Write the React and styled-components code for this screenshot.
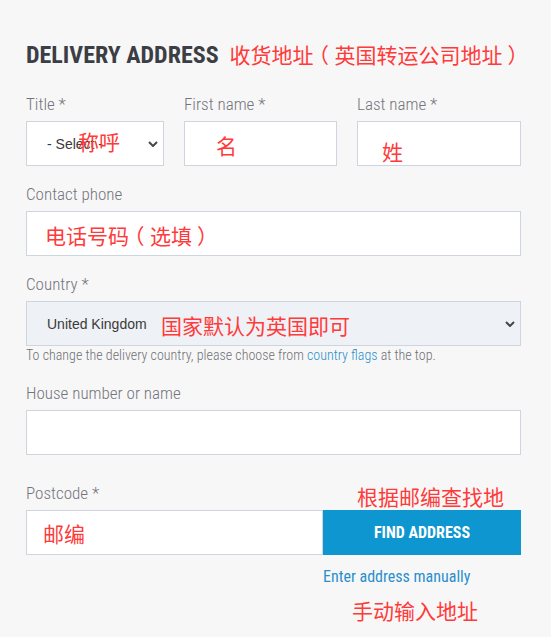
import React from "react";
import styled, { createGlobalStyle } from "styled-components";

const Global = createGlobalStyle`
  html, body { margin: 0; padding: 0; background: #ffffff; }
  * { box-sizing: border-box; }
`;

const cond = `"Roboto Condensed", "Roboto", "Liberation Sans", sans-serif`;
const cjk = `"Noto Sans CJK SC", "Noto Sans", sans-serif`;

const Page = styled.div`
  width: 551px;
  height: 637px;
  background: #f7f7f7;
  padding: 39px 30px 0 26px;
  font-family: ${cond};
  font-stretch: condensed;
`;

const Heading = styled.h2`
  margin: 0 0 24px;
  font-size: 24px;
  line-height: 30px;
  font-weight: 700;
  color: #3b3e44;
  text-transform: uppercase;
  white-space: nowrap;
`;

const Note = styled.span`
  font-family: ${cjk};
  font-stretch: normal;
  font-weight: 400;
  font-size: 21px;
  line-height: 21px;
  color: #ff3a3a;
  white-space: nowrap;
`;

/* half-width paren with margins so its ink sits centred in a full em */
const Paren = styled.span`
  font-feature-settings: "halt";
  margin-left: 5px;
  margin-right: 5.5px;
`;

const HeadNote = styled(Note)`
  margin-left: 11px;
  line-height: 30px;
`;

const Overlay = styled(Note)`
  position: absolute;
  left: ${(p) => p.$x}px;
  top: ${(p) => p.$y}px;
  pointer-events: none;
`;

const Row = styled.div`
  display: grid;
  grid-template-columns: 138px 153px 1fr;
  column-gap: 20px;
  margin-bottom: ${(p) => p.$mb ?? 18}px;
`;

const Field = styled.div`
  display: flex;
  flex-direction: column;
  margin-bottom: ${(p) => p.$mb ?? 0}px;
  position: relative;
`;

const Label = styled.label`
  font-size: 17px;
  line-height: 20px;
  font-weight: 300;
  color: #74757c;
  margin-bottom: 7px;
`;

const Box = styled.div`
  position: relative;
  height: 45px;
`;

const TextInput = styled.input`
  display: block;
  width: 100%;
  height: 45px;
  border: 1px solid #cfd5de;
  background: #ffffff;
  margin: 0;
  padding: 0 12px;
  outline: none;
  font-family: "Liberation Sans", sans-serif;
  font-size: 14px;
`;

const Select = styled.select`
  display: block;
  width: 100%;
  height: 45px;
  margin: 0;
  border: 1px solid #cfd5de;
  border-radius: 0;
  background: ${(p) => (p.$muted ? "#eef1f6" : "#ffffff")};
  appearance: none;
  -webkit-appearance: none;
  padding: 0 24px 0 20px;
  font-family: "Liberation Sans", Arial, sans-serif;
  font-size: 14px;
  color: #3a3a3a;
  outline: none;
`;

const Chevron = styled.svg`
  position: absolute;
  right: 6px;
  top: 50%;
  margin-top: -3px;
  pointer-events: none;
`;

const Help = styled.div`
  font-size: 14px;
  line-height: 18px;
  font-weight: 300;
  color: #6f7076;
  margin-bottom: 19px;
  white-space: nowrap;
`;

const Link = styled.a`
  color: #2a8fcc;
  text-decoration: none;
  cursor: pointer;
`;

const Split = styled.div`
  display: grid;
  grid-template-columns: 1fr 198px;
`;

const Button = styled.button`
  height: 45px;
  border: 0;
  margin: 0;
  background: #0e96d1;
  color: #ffffff;
  font-family: ${cond};
  font-stretch: condensed;
  font-weight: 700;
  font-size: 16px;
  text-transform: uppercase;
  cursor: pointer;
`;

const Aside = styled.div`
  grid-column: 2;
  display: flex;
  flex-direction: column;
  padding-top: 12px;
`;

const ManualLink = styled(Link)`
  font-size: 16px;
  line-height: 20px;
  font-weight: 400;
`;

const ManualNote = styled(Note)`
  margin: 13px 0 0 29px;
`;

const Arrow = () => (
  <Chevron width="10" height="6" viewBox="0 0 10 6">
    <path d="M1 1 L5 5 L9 1" fill="none" stroke="#474747" strokeWidth="2" />
  </Chevron>
);

export default function App() {
  return (
    <>
      <Global />
      <Page>
        <Heading>
          Delivery Address
          <HeadNote>
            收货地址<Paren>（</Paren>英国转运公司地址<Paren>）</Paren>
          </HeadNote>
        </Heading>

        <Row>
          <Field>
            <Label>Title *</Label>
            <Box>
              <Select defaultValue="">
                <option value="">- Select -</option>
                <option>Mr</option>
                <option>Mrs</option>
                <option>Ms</option>
              </Select>
              <Arrow />
              <Overlay $x={52} $y={10}>称呼</Overlay>
            </Box>
          </Field>
          <Field>
            <Label>First name *</Label>
            <Box>
              <TextInput type="text" />
              <Overlay $x={32} $y={14}>名</Overlay>
            </Box>
          </Field>
          <Field>
            <Label>Last name *</Label>
            <Box>
              <TextInput type="text" />
              <Overlay $x={25} $y={20}>姓</Overlay>
            </Box>
          </Field>
        </Row>

        <Field $mb={18}>
          <Label>Contact phone</Label>
          <Box>
            <TextInput type="tel" />
            <Overlay $x={19} $y={14}>
              电话号码<Paren>（</Paren>选填<Paren>）</Paren>
            </Overlay>
          </Box>
        </Field>

        <Field>
          <Label>Country *</Label>
          <Box>
            <Select $muted defaultValue="uk">
              <option value="uk">United Kingdom</option>
            </Select>
            <Arrow />
            <Overlay $x={135} $y={14}>国家默认为英国即可</Overlay>
          </Box>
        </Field>
        <Help>
          To change the delivery country, please choose from{" "}
          <Link>country flags</Link> at the top.
        </Help>

        <Field $mb={28}>
          <Label>House number or name</Label>
          <Box>
            <TextInput type="text" />
          </Box>
        </Field>

        <Field>
          <Label>Postcode *</Label>
          <Overlay $x={331} $y={3}>根据邮编查找地</Overlay>
          <Split>
            <Box>
              <TextInput type="text" />
              <Overlay $x={17} $y={13}>邮编</Overlay>
            </Box>
            <Button type="button">Find Address</Button>
            <Aside>
              <ManualLink>Enter address manually</ManualLink>
              <ManualNote>手动输入地址</ManualNote>
            </Aside>
          </Split>
        </Field>
      </Page>
    </>
  );
}
